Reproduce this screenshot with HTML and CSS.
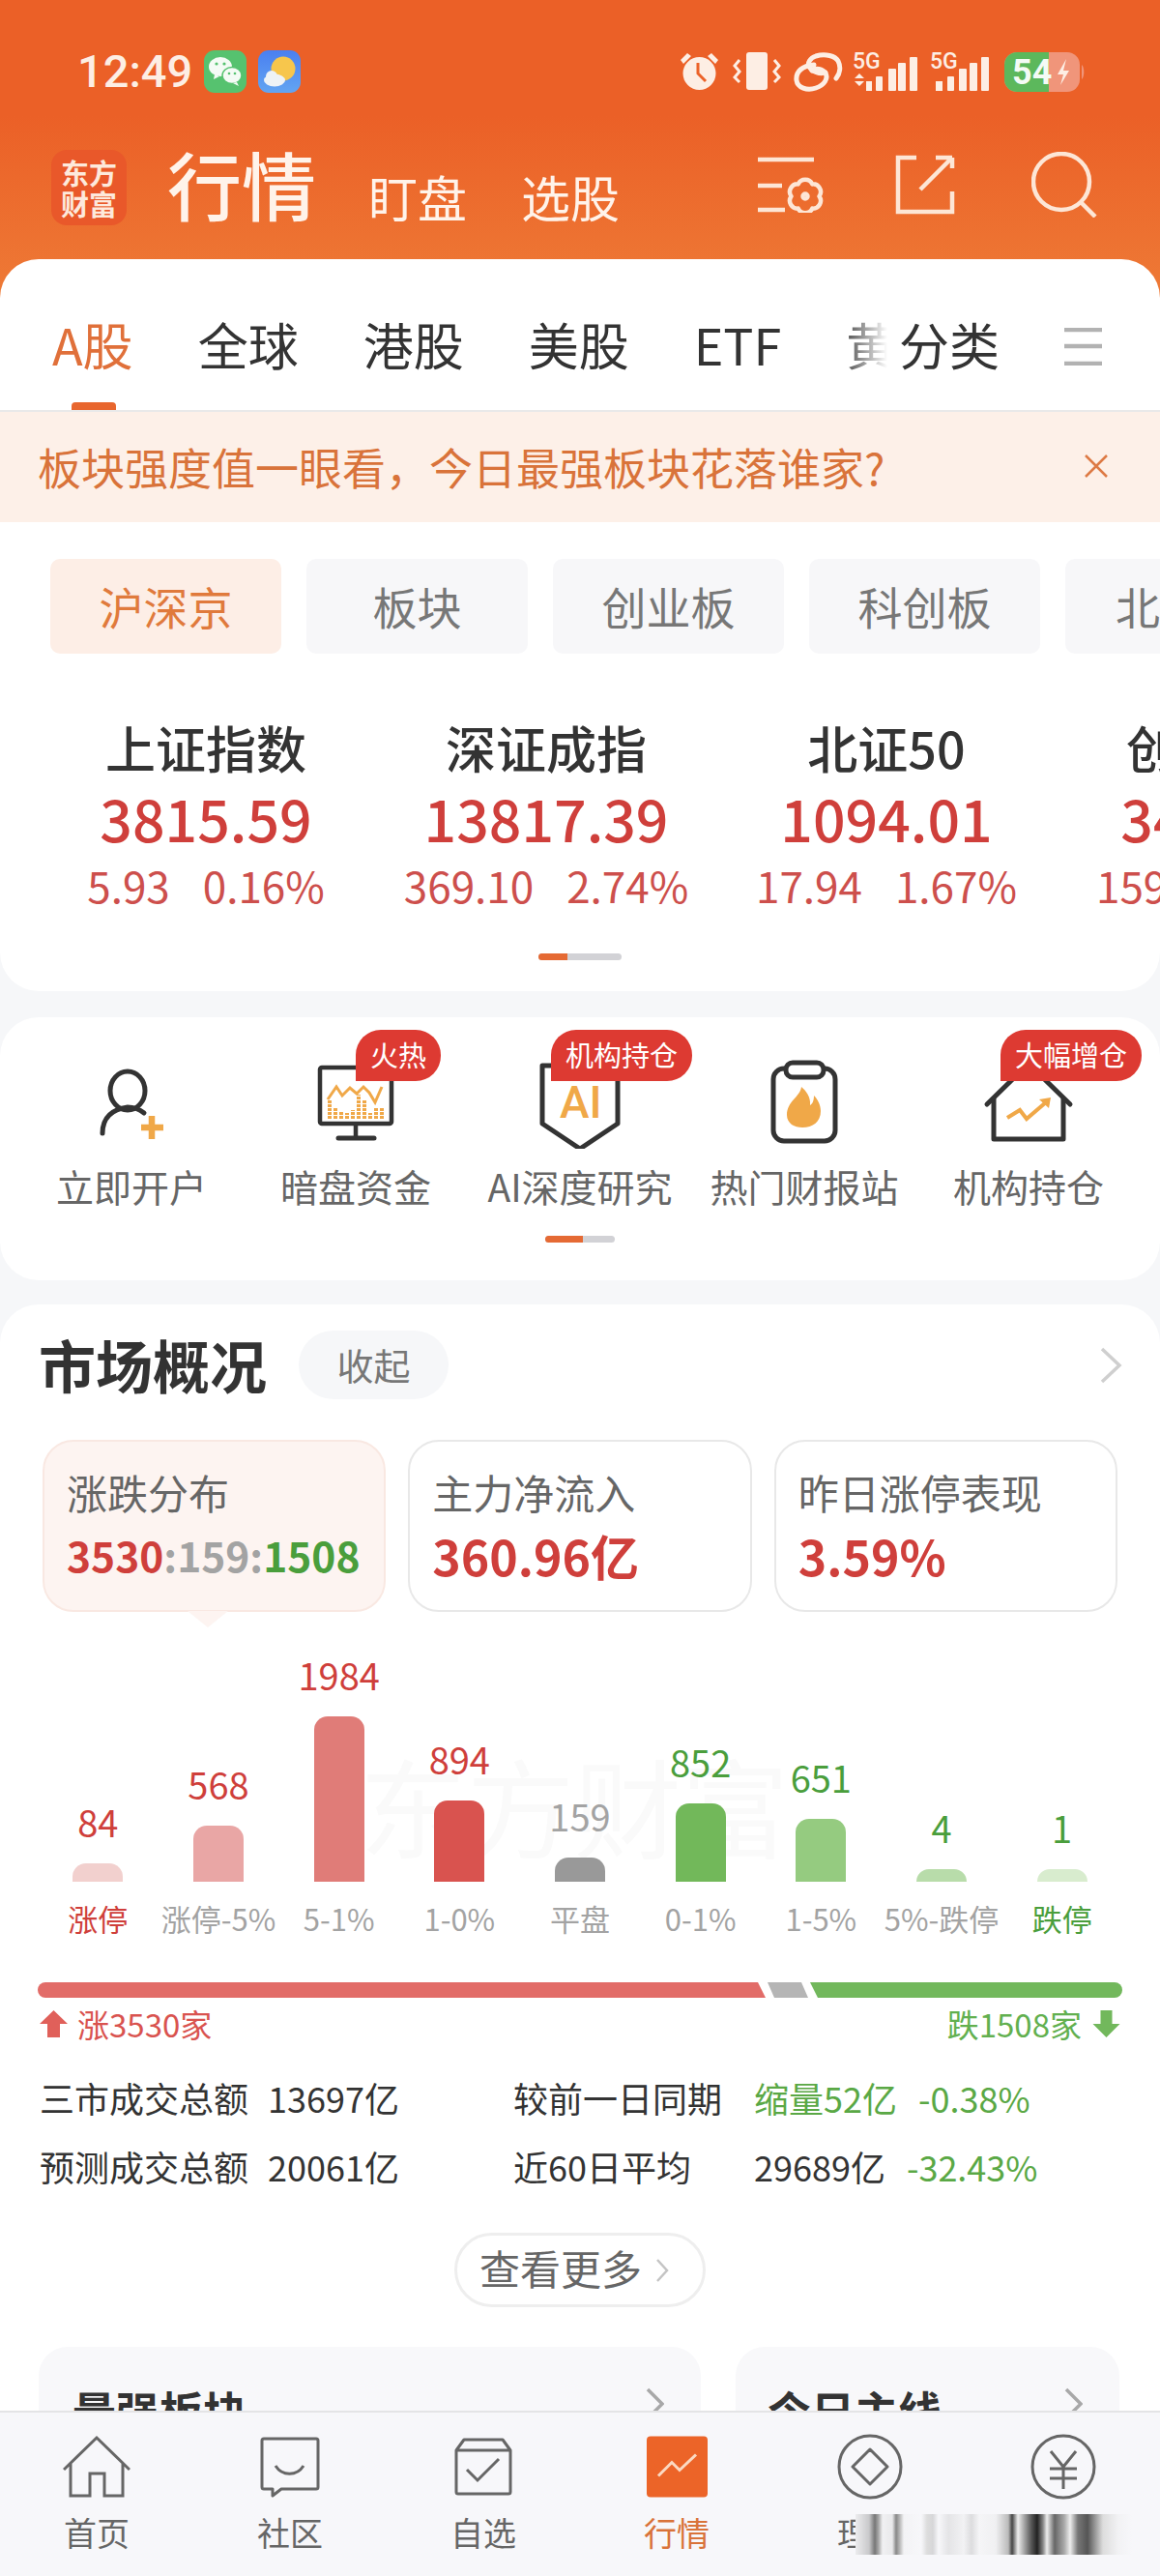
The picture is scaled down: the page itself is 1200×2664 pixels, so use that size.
FILE: index.html
```html
<!DOCTYPE html>
<html lang="zh-CN">
<head>
    <meta charset="UTF-8">
    <meta name="viewport" content="width=device-width, initial-scale=1.0">
    <title>行情</title>
    <link rel="stylesheet" href="styles.css">
</head>
<body>
<div class="phone">

    <div class="top">
        <div class="status">
            <span class="clock">12:49</span>
            <svg class="app-icon" viewBox="0 0 44 44"><rect width="44" height="44" rx="11" fill="#56c26f"/><ellipse cx="17" cy="17" rx="12" ry="10" fill="#f4fbf5"/><path d="M11 25l-1 5 6-3z" fill="#f4fbf5"/><ellipse cx="29" cy="26" rx="10" ry="8.500" fill="#f4fbf5" stroke="#56c26f" stroke-width="1.500"/><path d="M34 33l2 4-6-3z" fill="#f4fbf5"/><circle cx="13" cy="14" r="1.600" fill="#56c26f"/><circle cx="21" cy="14" r="1.600" fill="#56c26f"/><circle cx="26" cy="24" r="1.300" fill="#56c26f"/><circle cx="32" cy="24" r="1.300" fill="#56c26f"/></svg>
            <svg class="app-icon app-icon-b" viewBox="0 0 44 44"><defs><linearGradient id="sky" x1="0" y1="0" x2="0" y2="1"><stop offset="0" stop-color="#4a7ff0"/><stop offset="1" stop-color="#62a5f2"/></linearGradient></defs><rect width="44" height="44" rx="11" fill="url(#sky)"/><circle cx="26" cy="19" r="12.500" fill="#f7c64c"/><ellipse cx="17" cy="31" rx="11" ry="6.500" fill="#eef3f6"/><circle cx="14" cy="27" r="6" fill="#eef3f6"/></svg>
            <div class="status-right">
                <svg class="st-alarm" viewBox="0 0 41 40"><path d="M1 8l7-7 4 3-8 8zM40 8l-7-7-4 3 8 8z" fill="#fdeee4"/><circle cx="20.500" cy="22" r="17" fill="#fdeee4"/><path d="M19 11v11l8 8" fill="none" stroke="#ec6228" stroke-width="3"/></svg>
                <svg class="st-vibrate" viewBox="0 0 50 40"><rect x="14" y="0" width="22" height="39" rx="3" fill="#fdeee4"/><path d="M7 8L2 14l5 6-5 6 5 5M43 8l5 6-5 6 5 6-5 5" fill="none" stroke="#fdeee4" stroke-width="3"/></svg>
                <svg class="st-link" viewBox="0 0 51 41"><g fill="none" stroke="#fdeee4" stroke-width="5" stroke-linecap="round"><path d="M21 13C9 14 2 20 3 29c1 8 11 11 20 8 9-3 13-10 10-15-3-5-10-6-14-3"/><path d="M44 27c4-5 5-12 2-18-3-5-13-8-23-5-6 2-9 7-7 11 3 5 11 8 17 6"/></g></svg>
                <svg class="st-signal" viewBox="0 0 67 41"><text class="st-5g" x="0" y="17">5G</text><path d="M2 27l5-5 5 5zM2 30l5 5 5-5z" fill="#fdeee4"/><rect x="14" y="30" width="6" height="10" fill="#fdeee4"/><rect x="24" y="25" width="7" height="15" rx="1" fill="#fdeee4"/><rect x="37" y="17" width="8" height="23" rx="1" fill="#fdeee4"/><rect x="47" y="11" width="8" height="29" rx="1" fill="#fdeee4"/><rect x="59" y="5" width="8" height="35" rx="1" fill="#fdeee4"/></svg>
                <svg class="st-signal st-signal-b" viewBox="0 0 61 41"><text class="st-5g" x="0" y="17">5G</text><rect x="6" y="30" width="7" height="10" fill="#fdeee4"/><rect x="18" y="25" width="7" height="15" rx="1" fill="#fdeee4"/><rect x="30" y="17" width="8" height="23" rx="1" fill="#fdeee4"/><rect x="41" y="11" width="8" height="29" rx="1" fill="#fdeee4"/><rect x="53" y="5" width="8" height="35" rx="1" fill="#fdeee4"/></svg>
                <svg class="st-battery" viewBox="0 0 84 41"><rect width="78" height="41" rx="13" fill="#f0957a"/><path d="M13 0h33v41H13a13 13 0 0 1-13-13V13A13 13 0 0 1 13 0z" fill="#5cb85c"/><path d="M80 13c3 2 3 13 0 15z" fill="#f0957a"/><text class="st-level" x="8" y="33">54</text><path d="M64 7l-9 16h6l-3 11 9-15h-6z" fill="#fdeee4"/></svg>
            </div>
        </div>

        <div class="appbar">
            <div class="logo"><span>东方</span><span>财富</span></div>
            <span class="page-name">行情</span>
            <span class="page-link">盯盘</span>
            <span class="page-link">选股</span>
            <div class="appbar-icons">
                <svg class="ic-filter" viewBox="0 0 68 58"><g fill="none" stroke="#fde6d6" stroke-width="4.500"><path d="M0 3h58M0 30h25M0 55h28"/><path d="M56.250 28.400A8 8 0 0 1 63.500 41A8 8 0 0 1 56.250 53.600A8 8 0 0 1 41.750 53.600A8 8 0 0 1 34.500 41A8 8 0 0 1 41.750 28.400A8 8 0 0 1 56.250 28.400Z" stroke-linejoin="round"/><circle cx="49" cy="41" r="2.500"/></g></svg>
                <svg class="ic-share" viewBox="0 0 62 62"><g fill="none" stroke="#fde6d6" stroke-width="4.500"><path d="M22 3H3v56h56V38M59 3v11"/><path d="M26 36L59 3M42 3h17"/></g></svg>
                <svg class="ic-search" viewBox="0 0 68 68"><g fill="none" stroke="#fde6d6" stroke-width="4.500"><circle cx="31" cy="31" r="29"/><path d="M51 52l15 15"/></g></svg>
            </div>
        </div>
    </div>

    <div class="sheet">
        <div class="tabs">
            <div class="tabs-scroll">
                <span class="tab tab-on">A股</span>
                <span class="tab">全球</span>
                <span class="tab">港股</span>
                <span class="tab">美股</span>
                <span class="tab">ETF</span>
                <span class="tab">黄金</span>
            </div>
            <div class="tabs-more">
                <span class="tab">分类</span>
                <svg class="ic-menu" viewBox="0 0 39 39"><path d="M0 2h39M0 19h39M0 37h39" stroke="#b2b2b2" stroke-width="4.500"/></svg>
            </div>
        </div>

        <div class="notice">
            <span>板块强度值一眼看，今日最强板块花落谁家?</span>
            <svg class="ic-close" viewBox="0 0 24 24"><path d="M1 1l22 22M23 1L1 23" stroke="#dd7a45" stroke-width="2.500"/></svg>
        </div>

        <div class="pills">
            <span class="pill pill-on pill-a">沪深京</span>
            <span class="pill pill-b">板块</span>
            <span class="pill pill-a">创业板</span>
            <span class="pill pill-a">科创板</span>
            <span class="pill pill-c">北证</span>
        </div>

        <div class="indexes">
            <div class="index">
                <div class="index-name">上证指数</div>
                <div class="index-value">3815.59</div>
                <div class="index-sub"><span>5.93</span><span>0.16%</span></div>
            </div>
            <div class="index">
                <div class="index-name">深证成指</div>
                <div class="index-value">13817.39</div>
                <div class="index-sub"><span>369.10</span><span>2.74%</span></div>
            </div>
            <div class="index">
                <div class="index-name">北证50</div>
                <div class="index-value">1094.01</div>
                <div class="index-sub"><span>17.94</span><span>1.67%</span></div>
            </div>
            <div class="index">
                <div class="index-name">创业板指</div>
                <div class="index-value">3411.06</div>
                <div class="index-sub"><span>159.10</span><span>4.8%</span></div>
            </div>
        </div>

        <div class="dots dots-index"><i></i></div>
    </div>

    <div class="card shortcuts">
        <div class="shortcut-grid">
            <div class="shortcut">
                <svg class="shortcut-icon" viewBox="0 0 100 92"><g fill="none" stroke="#333" stroke-width="5" stroke-linecap="round"><ellipse cx="46" cy="32" rx="18" ry="20"/><path d="M20 76c0-17 11-25 26-27 7 0 12 2 17 6"/></g><path d="M60 70h23M71 58v24" stroke="#f0a848" stroke-width="6.500"/></svg>
                <span>立即开户</span>
            </div>
            <div class="shortcut">
                <svg class="shortcut-icon" viewBox="0 0 100 92"><g fill="none" stroke="#333" stroke-width="4.500"><rect x="13" y="8" width="74" height="58" rx="2"/><path d="M50 66v14"/><path d="M32 81h37" stroke-width="5" stroke-linecap="round"/></g><path d="M21 41l9-13 6 9 8-8 7 6 7-7 6 6 6 10 7-16" fill="none" stroke="#f0a848" stroke-width="3"/><g fill="none" stroke="#f0a848" stroke-width="4" stroke-dasharray="3 1"><path d="M23 61V41M29 61V50M35 61V53M41 61V55M47 61V52M53 61V36M59 61V42M65 61V55M71 61V50M77 61V50"/></g></svg>
                <span>暗盘资金</span>
                <b class="badge badge-hot">火热</b>
            </div>
            <div class="shortcut">
                <svg class="shortcut-icon" viewBox="0 0 100 92"><path d="M30 6H11v60l39 26 39-26V6H70" fill="none" stroke="#333" stroke-width="5" stroke-linejoin="round"/><text class="ai-mark" x="29" y="60">AI</text></svg>
                <span>AI深度研究</span>
                <b class="badge badge-org">机构持仓</b>
            </div>
            <div class="shortcut">
                <svg class="shortcut-icon" viewBox="0 0 100 92"><rect x="18" y="9" width="64" height="75" rx="11" fill="none" stroke="#333" stroke-width="5"/><rect x="31" y="3" width="39" height="15" rx="7" fill="#fff" stroke="#333" stroke-width="5"/><path d="M47 28c-1 10-15 15-15 29 0 9 8 13 16 13 11 0 19-6 19-17 0-6-3-12-7-16 0 6-2 9-4 10 1-8-4-15-9-19z" fill="#f0a848"/></svg>
                <span>热门财报站</span>
            </div>
            <div class="shortcut">
                <svg class="shortcut-icon" viewBox="0 0 100 92"><path d="M7 46L50 4l43 42" fill="none" stroke="#333" stroke-width="5" stroke-linecap="round"/><path d="M14 40v42h72V40" fill="none" stroke="#333" stroke-width="5" stroke-linejoin="round"/><path d="M28 60l13-8 7 9 20-17" fill="none" stroke="#f0a848" stroke-width="4"/><path d="M61 41l12-2-2 11z" fill="#f0a848"/></svg>
                <span>机构持仓</span>
                <b class="badge badge-add">大幅增仓</b>
            </div>
        </div>
        <div class="dots dots-short"><i></i></div>
    </div>

    <div class="card market">
        <div class="market-head">
            <h2>市场概况</h2>
            <span class="fold">收起</span>
            <svg class="chev chev-head" viewBox="0 0 23 38"><path d="M2 2l18 17L2 36" fill="none" stroke="#cfcfcf" stroke-width="3.500"/></svg>
        </div>

        <div class="metrics">
            <div class="metric metric-on">
                <div class="metric-name">涨跌分布</div>
                <div class="metric-value metric-small"><span class="up">3530</span><span class="flat">:159:</span><span class="down">1508</span></div>
            </div>
            <div class="metric">
                <div class="metric-name">主力净流入</div>
                <div class="metric-value up">360.96亿</div>
            </div>
            <div class="metric">
                <div class="metric-name">昨日涨停表现</div>
                <div class="metric-value up">3.59%</div>
            </div>
        </div>

        <div class="chart">
            <div class="watermark">东方财富</div>
            <div class="col"><span class="up">84</span><i class="bar c1" style="height:19px"></i></div>
            <div class="col"><span class="up">568</span><i class="bar c2" style="height:58px"></i></div>
            <div class="col"><span class="up">1984</span><i class="bar c3" style="height:171px"></i></div>
            <div class="col"><span class="up">894</span><i class="bar c4" style="height:84px"></i></div>
            <div class="col"><span class="flat">159</span><i class="bar c5" style="height:25px"></i></div>
            <div class="col"><span class="down">852</span><i class="bar c6" style="height:81px"></i></div>
            <div class="col"><span class="down">651</span><i class="bar c7" style="height:65px"></i></div>
            <div class="col"><span class="down">4</span><i class="bar c8" style="height:13px"></i></div>
            <div class="col"><span class="down">1</span><i class="bar c9" style="height:13px"></i></div>
        </div>
        <div class="axis">
            <span class="up">涨停</span><span>涨停-5%</span><span>5-1%</span><span>1-0%</span><span>平盘</span><span>0-1%</span><span>1-5%</span><span>5%-跌停</span><span class="down">跌停</span>
        </div>

        <div class="split">
            <i class="split-up"></i><i class="split-flat"></i><i class="split-down"></i>
        </div>
        <div class="split-labels">
            <span class="split-label label-up"><svg viewBox="0 0 29 28"><path d="M14.500 0L29 14h-8v14H8V14H0z" fill="#e0605a"/></svg>涨3530家</span>
            <span class="split-label label-down">跌1508家<svg viewBox="0 0 28 28"><path d="M14 28L0 14h8V0h12v14h8z" fill="#72b85c"/></svg></span>
        </div>

        <div class="stats">
            <span>三市成交总额</span><span>13697亿</span><span>较前一日同期</span>
            <div class="stat-end down-soft"><span>缩量52亿</span><span>-0.38%</span></div>
            <span>预测成交总额</span><span>20061亿</span><span>近60日平均</span>
            <div class="stat-end stat-end-b"><span class="stat-plain">29689亿</span><span class="down-soft">-32.43%</span></div>
        </div>

        <div class="more-wrap">
            <div class="more">查看更多<svg class="chev" viewBox="0 0 14 26"><path d="M2 2l10 11L2 24" fill="none" stroke="#c4c4c4" stroke-width="2.500"/></svg></div>
        </div>

        <div class="lists">
            <div class="list list-a"><strong>最强板块</strong><svg class="chev" viewBox="0 0 19 34"><path d="M2 2l15 15L2 32" fill="none" stroke="#a8a8a8" stroke-width="3.500"/></svg></div>
            <div class="list list-b"><strong>今日主线</strong><svg class="chev" viewBox="0 0 19 34"><path d="M2 2l15 15L2 32" fill="none" stroke="#a8a8a8" stroke-width="3.500"/></svg></div>
        </div>
    </div>

    <div class="nav">
        <div class="nav-item">
            <svg class="nav-home" viewBox="0 0 70 64"><path d="M1 35L35 2l34 33M8 28v34h20V39h15v23h19V28" fill="none" stroke="#666" stroke-width="3"/></svg>
            <span>首页</span>
        </div>
        <div class="nav-item">
            <svg class="nav-chat" viewBox="0 0 62 62"><path d="M4 2h54a2 2 0 0 1 2 2v48a2 2 0 0 1-2 2H22l-9 7v-7H4a2 2 0 0 1-2-2V4a2 2 0 0 1 2-2z" fill="none" stroke="#666" stroke-width="3" stroke-linejoin="round"/><path d="M16 30c7 11 22 11 29 0" fill="none" stroke="#666" stroke-width="3"/></svg>
            <span>社区</span>
        </div>
        <div class="nav-item">
            <svg class="nav-box" viewBox="0 0 60 60"><path d="M10 2h40l8 11v43a2 2 0 0 1-2 2H4a2 2 0 0 1-2-2V13zM2 13h56" fill="none" stroke="#666" stroke-width="3" stroke-linejoin="round"/><path d="M13 33l11 11 22-22" fill="none" stroke="#666" stroke-width="3"/></svg>
            <span>自选</span>
        </div>
        <div class="nav-item nav-on">
            <svg class="nav-chart" viewBox="0 0 63 63"><rect width="63" height="63" rx="4" fill="#ec6428"/><path d="M12 41l14-14 8 8 17-16" fill="none" stroke="#fbd9c2" stroke-width="3"/></svg>
            <span>行情</span>
        </div>
        <div class="nav-item">
            <svg class="nav-coin" viewBox="0 0 68 68"><circle cx="34" cy="34" r="32" fill="none" stroke="#666" stroke-width="3"/><path d="M34 16l18 18-18 18-18-18z" fill="none" stroke="#666" stroke-width="3" stroke-linejoin="round"/></svg>
            <span>理财</span>
        </div>
        <div class="nav-item">
            <svg class="nav-coin" viewBox="0 0 68 68"><circle cx="34" cy="34" r="32" fill="none" stroke="#666" stroke-width="3"/><path d="M21 18l13 16 13-16M20 36h28M20 46h28M34 34v23" fill="none" stroke="#666" stroke-width="3"/></svg>
            <span>交易</span>
        </div>
        <div class="mosaic"></div>
    </div>

</div>
</body>
</html>
```

FILE: styles.css
```css
* {
    box-sizing: border-box;
}

body {
    margin: 0;
    font-family: "Noto Sans CJK SC", sans-serif;
    color: #333;
}

svg {
    display: block;
    flex: none;
}

.phone {
    position: relative;
    width: 1200px;
    height: 2664px;
    overflow: hidden;
    background: #f6f7f9;
}

.up {
    color: #cf3f3b;
}

.flat {
    color: #a3a3a3;
}

.down {
    color: #4a9e3c;
}

.down-soft {
    color: #5aa845;
}

/* orange header */
.top {
    height: 308px;
    background: linear-gradient(#eb6027, #eb6027 120px, #ee7a36 308px);
}

.status {
    display: flex;
    align-items: center;
    height: 44px;
    padding: 0 0 0 80px;
    position: relative;
    top: 52px;
}

.clock {
    width: 131px;
    font-family: Roboto, sans-serif;
    font-size: 47px;
    font-weight: 500;
    color: #fdeee4;
    line-height: 44px;
}

.app-icon {
    width: 44px;
    height: 44px;
}

.app-icon-b {
    margin-left: 12px;
}

.status-right {
    display: flex;
    align-items: center;
    margin-left: 392px;
}

.st-alarm {
    width: 41px;
    height: 40px;
    margin-right: 14px;
}

.st-vibrate {
    width: 50px;
    height: 40px;
    margin-right: 13px;
}

.st-link {
    width: 51px;
    height: 41px;
    margin-right: 10px;
}

.st-signal {
    width: 67px;
    height: 41px;
    margin-right: 13px;
}

.st-signal-b {
    width: 61px;
    margin-right: 16px;
}

.st-battery {
    width: 84px;
    height: 41px;
}

.st-5g {
    font-family: Roboto, sans-serif;
    font-size: 23px;
    font-weight: 500;
    fill: #fdeee4;
}

.st-level {
    font-family: Roboto, sans-serif;
    font-size: 36px;
    font-weight: 700;
    fill: #f4fbf5;
}

.appbar {
    display: flex;
    align-items: flex-end;
    height: 78px;
    margin-top: 111px;
    padding-left: 53px;
    color: #fff3ea;
}

.logo {
    display: flex;
    flex-direction: column;
    align-items: center;
    justify-content: center;
    width: 78px;
    height: 78px;
    border-radius: 16px;
    background: #e9582a;
    font-size: 29px;
    font-weight: 700;
    line-height: 32px;
    color: #fde9dc;
}

.page-name {
    margin: 0 0 1px 42px;
    font-size: 77px;
    font-weight: 500;
    line-height: 84px;
}

.page-link {
    margin: 0 0 -2px 56px;
    font-size: 51px;
    line-height: 64px;
}

.page-name + .page-link {
    margin-left: 54px;
}

.appbar-icons {
    display: flex;
    align-items: flex-start;
    margin-left: auto;
    height: 70px;
    margin-bottom: 6px;
    padding-right: 65px;
}

.ic-filter {
    width: 68px;
    height: 58px;
    margin-top: 5px;
}

.ic-share {
    width: 62px;
    height: 62px;
    margin-left: 74px;
    margin-top: 3px;
}

.ic-search {
    width: 68px;
    height: 68px;
    margin-left: 79px;
}

/* white sheet */
.sheet {
    position: relative;
    margin-top: -40px;
    height: 757px;
    background: #fff;
    border-radius: 40px;
    overflow: hidden;
}

.tabs {
    position: relative;
    display: flex;
    height: 158px;
    padding-left: 54px;
    border-bottom: 2px solid #e9e9e9;
}

.tabs-scroll {
    display: flex;
    gap: 67px;
    width: 864px;
    overflow: hidden;
}

.tab {
    position: relative;
    flex: none;
    height: 156px;
    padding-top: 58px;
    font-size: 52px;
    line-height: 60px;
}

.tab-on {
    color: #e0703a;
}

.tab-on::after {
    content: "";
    position: absolute;
    left: 20px;
    bottom: 0;
    width: 46px;
    height: 8px;
    border-radius: 4px 4px 0 0;
    background: #e8662e;
}

.tabs-more {
    position: relative;
    display: flex;
    align-items: center;
    padding-left: 12px;
}

.tabs-more::before {
    content: "";
    position: absolute;
    top: 0;
    left: -40px;
    width: 40px;
    height: 100%;
    background: linear-gradient(90deg, rgba(255, 255, 255, 0.2), #fff);
}

.ic-menu {
    width: 39px;
    height: 39px;
    margin-left: 67px;
    margin-top: 24px;
}

.notice {
    display: flex;
    align-items: center;
    justify-content: space-between;
    height: 114px;
    padding: 0 54px 2px 39px;
    background: #fdf0e8;
    font-size: 45px;
    color: #d9733a;
}

.ic-close {
    width: 24px;
    height: 24px;
}

.pills {
    display: flex;
    gap: 26px;
    padding: 38px 0 0 52px;
    white-space: nowrap;
}

.pill {
    flex: none;
    height: 98px;
    border-radius: 10px;
    background: #f7f7f9;
    font-size: 46px;
    line-height: 96px;
    text-align: center;
    color: #777;
}

.pill-a {
    width: 239px;
}

.pill-b {
    width: 229px;
}

.pill-c {
    width: 160px;
    text-align: left;
    padding-left: 52px;
}

.pill-on {
    background: #fdeee6;
    color: #e07a3c;
}

.indexes {
    display: flex;
    margin-top: 67px;
    padding-left: 37px;
    white-space: nowrap;
}

.index {
    flex: none;
    width: 352px;
    text-align: center;
}

.index-name {
    font-size: 52px;
    font-weight: 500;
    line-height: 60px;
}

.index-value {
    margin-top: 8px;
    font-size: 59px;
    font-weight: 500;
    line-height: 70px;
    color: #cf3f3b;
}

.index-sub {
    display: flex;
    justify-content: center;
    gap: 34px;
    margin-top: 9px;
    font-size: 44px;
    line-height: 50px;
    color: #cd4f4c;
}

.dots {
    position: relative;
    height: 7px;
    border-radius: 4px;
    background: #d2d2d6;
}

.dots i {
    display: block;
    height: 100%;
    border-radius: 4px 0 0 4px;
    background: #e56a34;
}

.dots-index {
    width: 86px;
    margin: 46px auto 0;
}

.dots-index i {
    width: 30px;
}

.dots-short {
    width: 72px;
    margin: 27px auto 0;
}

.dots-short i {
    width: 39px;
}

.card {
    background: #fff;
    border-radius: 40px;
}

.shortcuts {
    height: 272px;
    margin-top: 27px;
}

.shortcut-grid {
    display: grid;
    grid-template-columns: repeat(5, 232px);
    padding: 44px 20px 0;
}

.shortcut {
    position: relative;
    display: flex;
    flex-direction: column;
    align-items: center;
    font-size: 39px;
    line-height: 50px;
    color: #666;
    white-space: nowrap;
}

.shortcut-icon {
    width: 100px;
    height: 92px;
    margin-bottom: 13px;
}

.ai-mark {
    font-family: Roboto, sans-serif;
    font-size: 46px;
    font-weight: 500;
    fill: #f0a848;
}

.badge {
    position: absolute;
    top: -31px;
    height: 53px;
    padding: 0 15px;
    border-radius: 26px 26px 26px 0;
    background: #dd3a32;
    font-size: 29px;
    font-weight: 400;
    line-height: 51px;
    color: #fff;
}

.badge-hot {
    left: 116px;
}

.badge-org {
    left: 86px;
}

.badge-add {
    left: 87px;
}

.market {
    height: 1400px;
    margin-top: 25px;
}

.market-head {
    display: flex;
    align-items: center;
    height: 71px;
    padding: 0 39px 0 40px;
    position: relative;
    top: 27px;
}

.market-head h2 {
    margin: -2px 0 0;
    font-size: 59px;
    font-weight: 700;
}

.fold {
    width: 155px;
    height: 71px;
    margin-left: 33px;
    border-radius: 36px;
    background: #f6f7f9;
    font-size: 38px;
    line-height: 69px;
    text-align: center;
    color: #777;
}

.chev {
    display: block;
}

.chev-head {
    width: 23px;
    height: 38px;
    margin-left: auto;
}

.metrics {
    display: grid;
    grid-template-columns: repeat(3, 1fr);
    gap: 23px;
    margin-top: 69px;
    padding: 0 44px;
}

.metric {
    position: relative;
    height: 178px;
    padding: 27px 0 0 23px;
    border: 2px solid #e8e8e8;
    border-radius: 32px;
}

.metric-on {
    border-color: #f9e8e2;
    background: #fdf4f1;
}

.metric-on::after {
    content: "";
    position: absolute;
    left: 148px;
    bottom: -18px;
    border-top: 17px solid #fdf4f1;
    border-left: 21px solid transparent;
    border-right: 21px solid transparent;
}

.metric-name {
    font-size: 42px;
    line-height: 50px;
    color: #666;
}

.metric-value {
    margin-top: 10px;
    font-size: 50px;
    font-weight: 700;
    line-height: 60px;
    white-space: nowrap;
}

.metric-small {
    font-size: 42.500px;
}

.chart {
    position: relative;
    display: grid;
    grid-template-columns: repeat(9, 1fr);
    align-items: end;
    height: 279px;
    padding: 0 39px;
}

.watermark {
    position: absolute;
    left: 372px;
    top: 134px;
    font-size: 111px;
    line-height: 130px;
    color: #fafafa;
    white-space: nowrap;
}

.col {
    position: relative;
    display: flex;
    flex-direction: column;
    align-items: center;
    font-size: 38px;
    line-height: 50px;
}

.bar {
    display: block;
    width: 52px;
    margin-top: 18px;
    border-radius: 14px 14px 0 0;
}

.c1 { background: #f2d0ce; }
.c2 { background: #e9a6a5; }
.c3 { background: #e07c78; }
.c4 { background: #d9534f; }
.c5 { background: #999; }
.c6 { background: #72b85a; }
.c7 { background: #95cb80; }
.c8 { background: #b8dcaa; }
.c9 { background: #d8ecce; }

.axis {
    display: grid;
    grid-template-columns: repeat(9, 1fr);
    margin-top: 18px;
    padding: 0 39px;
    font-size: 31px;
    line-height: 40px;
    text-align: center;
    white-space: nowrap;
    color: #a3a3a3;
}

.split {
    display: flex;
    gap: 2px;
    height: 16px;
    margin: 46px 39px 0;
    border-radius: 8px;
    overflow: hidden;
}

.split i {
    display: block;
    height: 100%;
}

.split-up {
    width: 753px;
    background: #e26c68;
    clip-path: polygon(0 0, calc(100% - 8px) 0, 100% 100%, 0 100%);
}

.split-flat {
    width: 42px;
    background: #b5b5b5;
    clip-path: polygon(0 0, calc(100% - 7px) 0, 100% 100%, 7px 100%);
}

.split-down {
    flex: 1;
    background: #72b85c;
    clip-path: polygon(0 0, 100% 0, 100% 100%, 8px 100%);
}

.split-labels {
    display: flex;
    justify-content: space-between;
    margin-top: 7px;
    padding: 0 41px;
    font-size: 33px;
    line-height: 40px;
}

.split-label {
    display: flex;
    align-items: center;
}

.split-label svg {
    width: 29px;
    height: 28px;
}

.label-up {
    gap: 10px;
    color: #d9534f;
}

.label-down {
    gap: 11px;
    color: #62b04f;
}

.stats {
    display: grid;
    grid-template-columns: 236px 254px 249px 1fr;
    row-gap: 27px;
    margin-top: 34px;
    padding-left: 41px;
    font-size: 36px;
    line-height: 44px;
    white-space: nowrap;
}

.stat-end {
    display: flex;
    gap: 22px;
}

.stat-plain {
    color: #333;
}

.more-wrap {
    display: flex;
    justify-content: center;
    margin-top: 47px;
}

.more {
    display: flex;
    align-items: center;
    gap: 14px;
    width: 260px;
    height: 77px;
    padding: 0 0 6px 23px;
    border: 3px solid #eee;
    border-radius: 39px;
    font-size: 42px;
    color: #666;
}

.more .chev {
    width: 14px;
    height: 26px;
    margin-top: 6px;
}

.lists {
    display: flex;
    gap: 36px;
    margin-top: 41px;
    padding: 0 42px 0 40px;
}

.list {
    display: flex;
    justify-content: space-between;
    height: 120px;
    border-radius: 30px 30px 0 0;
    background: #f8f8fa;
    padding-top: 36px;
    padding-right: 38px;
    font-size: 45px;
    line-height: 60px;
}

.list .chev {
    width: 19px;
    height: 34px;
    margin-top: 6px;
}

.list-a {
    width: 685px;
    padding-left: 35px;
}

.list-b {
    width: 397px;
    padding-left: 33px;
}

/* bottom bar */
.nav {
    position: absolute;
    left: 0;
    right: 0;
    bottom: 0;
    display: grid;
    grid-template-columns: repeat(6, 200px);
    height: 171px;
    border-top: 2px solid #e4e4e6;
    background: #f7f7fa;
}

.nav-item {
    display: flex;
    flex-direction: column;
    align-items: center;
    font-size: 34px;
    line-height: 40px;
    color: #666;
}

.nav-item svg {
    height: 68px;
    margin: 22px 0 14px;
}

.nav-home {
    width: 70px;
}

.nav-chat {
    width: 62px;
}

.nav-box {
    width: 60px;
}

.nav-chart {
    width: 63px;
}

.nav-coin {
    width: 68px;
}

.nav-on {
    color: #d9733a;
}

/* smeared area over the last labels */
.mosaic {
    position: absolute;
    left: 885px;
    top: 105px;
    width: 286px;
    height: 42px;
    background: linear-gradient(90deg,
        #ececee 0, #c9c9cb 14px, #777 20px, #aaa 24px, #f0f0f2 28px,
        #e9e9eb 38px, #888 42px, #bbb 46px, #f3f3f5 50px,
        #f7f7fa 68px, #ddd 74px, #d6d6d8 80px, #f7f7fa 86px,
        #e4e4e6 96px, #f2f2f4 112px, #dcdcde 120px, #f5f5f7 128px,
        #f0f0f2 145px, #bbb 158px, #444 162px, #eee 168px,
        #555 182px, #222 188px, #888 194px, #eee 198px,
        #666 206px, #aaa 216px, #eee 222px, #777 230px, #555 240px,
        #999 248px, #ddd 256px, #f2f2f4 272px, #f7f7fa 286px);
}
```
